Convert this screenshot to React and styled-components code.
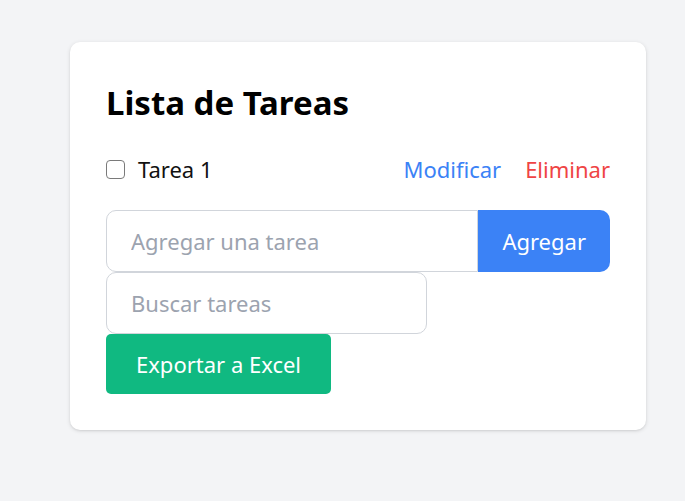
import React, { useState } from 'react';
import styled, { createGlobalStyle } from 'styled-components';

const GlobalStyle = createGlobalStyle`
  html, body {
    margin: 0;
    padding: 0;
    background: #f3f4f6;
    font-family: "Noto Sans", "Open Sans", sans-serif;
  }
`;

const Page = styled.div`
  min-height: 501px;
  padding: 42px 39px 0 70px;
  box-sizing: border-box;
`;

const Card = styled.div`
  width: 576px;
  box-sizing: border-box;
  background: #ffffff;
  border-radius: 10px;
  box-shadow: 0 1px 4px rgba(0, 0, 0, 0.12), 0 1px 2px rgba(0, 0, 0, 0.06);
  padding: 36px;
`;

const Title = styled.h1`
  margin: 0 0 26px;
  font-size: 33px;
  line-height: 50px;
  font-weight: 700;
  color: #000;
`;

const TaskRow = styled.div`
  display: flex;
  align-items: center;
  height: 30px;
  margin-bottom: 26px;
  font-size: 22px;
`;

const Check = styled.span`
  box-sizing: border-box;
  width: 19px;
  height: 19px;
  border: 1.3px solid #7a7a7a;
  border-radius: 4px;
  margin: 0 13px 0 0;
`;

const TaskText = styled.span`
  flex: 1;
  color: #111;
`;

const ActionLink = styled.span`
  color: ${(p) => p.$color};
  margin-left: ${(p) => (p.$first ? '0' : '24px')};
  cursor: pointer;
`;

const AddRow = styled.div`
  display: flex;
`;

const Input = styled.input`
  box-sizing: border-box;
  height: 62px;
  width: ${(p) => p.$width || 'auto'};
  flex: ${(p) => (p.$grow ? 1 : 'none')};
  border: 1px solid #d1d5db;
  border-radius: ${(p) => p.$radius};
  padding: 0 24px;
  font-family: inherit;
  font-size: 22px;
  color: #111;
  outline: none;
  &::placeholder {
    color: #9ca3af;
  }
`;

const Button = styled.button`
  box-sizing: border-box;
  border: none;
  color: #fff;
  font-family: inherit;
  font-size: 22px;
  cursor: pointer;
  background: ${(p) => p.$bg};
  border-radius: ${(p) => p.$radius};
  height: ${(p) => p.$height};
  padding: 0 ${(p) => p.$pad};
`;

export default function App() {
  const [task, setTask] = useState('');
  const [search, setSearch] = useState('');

  return (
    <>
      <GlobalStyle />
      <Page>
        <Card>
          <Title>Lista de Tareas</Title>
          <TaskRow>
            <Check />
            <TaskText>Tarea 1</TaskText>
            <ActionLink $color="#3b82f6" $first>Modificar</ActionLink>
            <ActionLink $color="#ef4444">Eliminar</ActionLink>
          </TaskRow>
          <AddRow>
            <Input
              $grow
              $radius="10px 0 0 10px"
              placeholder="Agregar una tarea"
              value={task}
              onChange={(e) => setTask(e.target.value)}
            />
            <Button $bg="#3b82f6" $radius="0 10px 10px 0" $height="62px" $pad="24px">
              Agregar
            </Button>
          </AddRow>
          <Input
            $width="321px"
            $radius="10px"
            placeholder="Buscar tareas"
            value={search}
            onChange={(e) => setSearch(e.target.value)}
          />
          <div>
            <Button $bg="#10b981" $radius="5px" $height="60px" $pad="30px">
              Exportar a Excel
            </Button>
          </div>
        </Card>
      </Page>
    </>
  );
}
